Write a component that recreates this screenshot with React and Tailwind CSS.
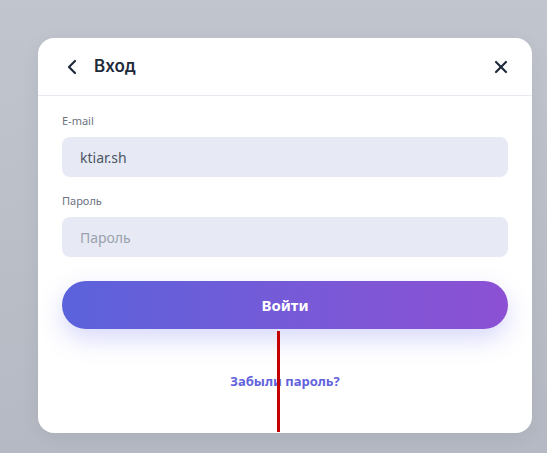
import { ChevronLeft, X } from 'lucide-react';

export default function App() {
    return (
        <div className="relative w-[547px] h-[453px] overflow-hidden bg-gradient-to-b from-[#c1c5cd] to-[#b4b9c3] font-['Noto_Sans',sans-serif]">
            <div className="ml-[38px] mt-[38px] w-[494px] h-[395px] bg-white rounded-[16px] shadow-[0_4px_20px_rgba(0,0,0,0.06)] flex flex-col">
                {/* Шапка */}
                <div className="h-[58px] flex items-center pl-[22px] pr-[21px] border-b border-[#e8eaf2]">
                    <ChevronLeft className="text-[#1f2a3a]" size={24} strokeWidth={2.2} />
                    <span className="ml-[10px] text-[17px] font-semibold text-[#1f2a3a] font-['Inter',sans-serif]">Вход</span>
                    <X className="ml-auto text-[#1f2a3a]" size={20} strokeWidth={2.6} />
                </div>

                <div className="px-[24px] pt-[18px] flex flex-col">
                    <label className="text-[11px] text-[#6b7280] leading-[14px]">E-mail</label>
                    <div className="mt-[9px] h-[40px] rounded-[8px] bg-[#e7eaf4] flex items-center px-[18px] text-[14px] text-[#4b5563]">
                        ktiar.sh
                    </div>

                    <label className="mt-[17px] text-[11px] text-[#6b7280] leading-[14px]">Пароль</label>
                    <div className="mt-[9px] h-[40px] rounded-[8px] bg-[#e7eaf4] flex items-center px-[18px] text-[14px] text-[#9aa1ae]">
                        Пароль
                    </div>

                    <button className="mt-[24px] h-[48px] rounded-full bg-gradient-to-r from-[#5a62db] to-[#8c50d4] text-white text-[15px] font-bold shadow-[0_10px_24px_rgba(99,102,241,0.25)]">
                        Войти
                    </button>

                    <div className="mt-[43px] text-center text-[13px] font-bold text-[#6263dc]">
                        Забыли пароль?
                    </div>
                </div>
            </div>
            <div className="absolute left-[277px] top-[331px] w-[3px] h-[101px] bg-[#c40000]" />
        </div>
    );
}
